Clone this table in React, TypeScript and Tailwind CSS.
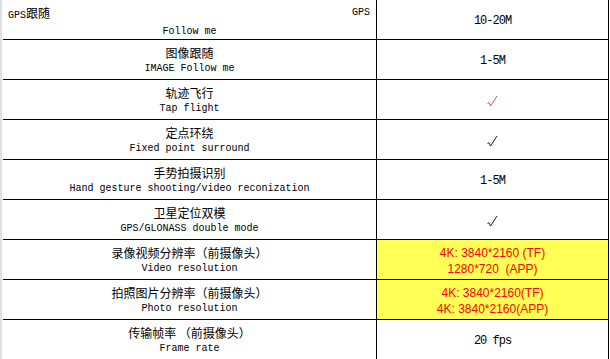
import React from 'react';

const MONO = "font-['Liberation_Mono','Noto_Sans_CJK_SC',monospace]";
const CJK = "font-['Noto_Sans_CJK_SC','Liberation_Sans',sans-serif]";

interface Spec {
  zh: React.ReactNode;
  en: string;
  value: React.ReactNode;
  highlight?: boolean;
  gps?: boolean;
}

const Check: React.FC<{ color: string }> = ({ color }) => (
  <svg width="11" height="12" viewBox="0 0 11 12" fill="none">
    <polyline points="0.5,8.5 1.8,7.6 3.6,11 10,1" stroke={color} strokeWidth="0.9" />
  </svg>
);

const Plain: React.FC<{ text: string }> = ({ text }) => (
  <span className={`${MONO} text-[12px] tracking-[-1px] text-black`}>{text}</span>
);

const RedLines: React.FC<{ lines: string[] }> = ({ lines }) => (
  <div className="flex flex-col items-center pt-[5px]">
    {lines.map((l) => (
      <div
        key={l}
        className="font-['Liberation_Sans','Noto_Sans_CJK_SC',sans-serif] text-[12px] leading-[16px] text-[#ff0000] whitespace-pre"
      >
        {l}
      </div>
    ))}
  </div>
);

const rows: Spec[] = [
  { zh: 'GPS跟随', en: 'Follow me', value: <Plain text="10-20M" />, gps: true },
  { zh: '图像跟随', en: 'IMAGE Follow me', value: <Plain text="1-5M" /> },
  { zh: '轨迹飞行', en: 'Tap flight', value: <Check color="#c83a3a" /> },
  { zh: '定点环绕', en: 'Fixed point surround', value: <Check color="#000" /> },
  { zh: '手势拍摄识别', en: 'Hand gesture shooting/video reconization', value: <Plain text="1-5M" /> },
  { zh: '卫星定位双模', en: 'GPS/GLONASS double mode', value: <Check color="#000" /> },
  {
    zh: '录像视频分辨率（前摄像头）',
    en: 'Video resolution',
    value: <RedLines lines={['4K: 3840*2160 (TF)', '1280*720  (APP)']} />,
    highlight: true,
  },
  {
    zh: '拍照图片分辨率（前摄像头）',
    en: 'Photo resolution',
    value: <RedLines lines={['4K: 3840*2160(TF)', '4K: 3840*2160(APP)']} />,
    highlight: true,
  },
  { zh: '传输帧率 （前摄像头）', en: 'Frame rate', value: <Plain text="20 fps" /> },
];

const Row: React.FC<{ spec: Spec }> = ({ spec }) => (
  <div className="flex h-[40px] shrink-0 border-b border-black">
    <div className="w-[374px] shrink-0 border-r border-black pt-[5px]">
      {spec.gps ? (
        <div className={`${CJK} flex justify-between pl-[5px] pr-[6px] text-[12px] leading-[16px] text-black`}>
          <span>
            <span className={`${MONO} text-[10px]`}>GPS</span>跟随
          </span>
          <span className={`${MONO} text-[10px]`}>GPS</span>
        </div>
      ) : (
        <div className={`${CJK} whitespace-pre text-center text-[12px] leading-[16px] text-black`}>{spec.zh}</div>
      )}
      <div className={`${MONO} whitespace-pre text-center text-[10px] leading-[16px] text-black`}>{spec.en}</div>
    </div>
    <div
      className={`flex flex-1 justify-center ${spec.highlight ? 'items-start bg-[#ffff55]' : 'items-center bg-white pt-[3px]'}`}
    >
      {spec.value}
    </div>
  </div>
);

const App: React.FC = () => {
  return (
    <div className="h-[359px] w-[610px] overflow-hidden border-l-2 border-[#e0e0e0] bg-white pl-[1px]">
      <div className="flex w-[606px] flex-col border-r border-black">
        {rows.map((r, i) => (
          <Row key={i} spec={r} />
        ))}
      </div>
    </div>
  );
};

export default App;
